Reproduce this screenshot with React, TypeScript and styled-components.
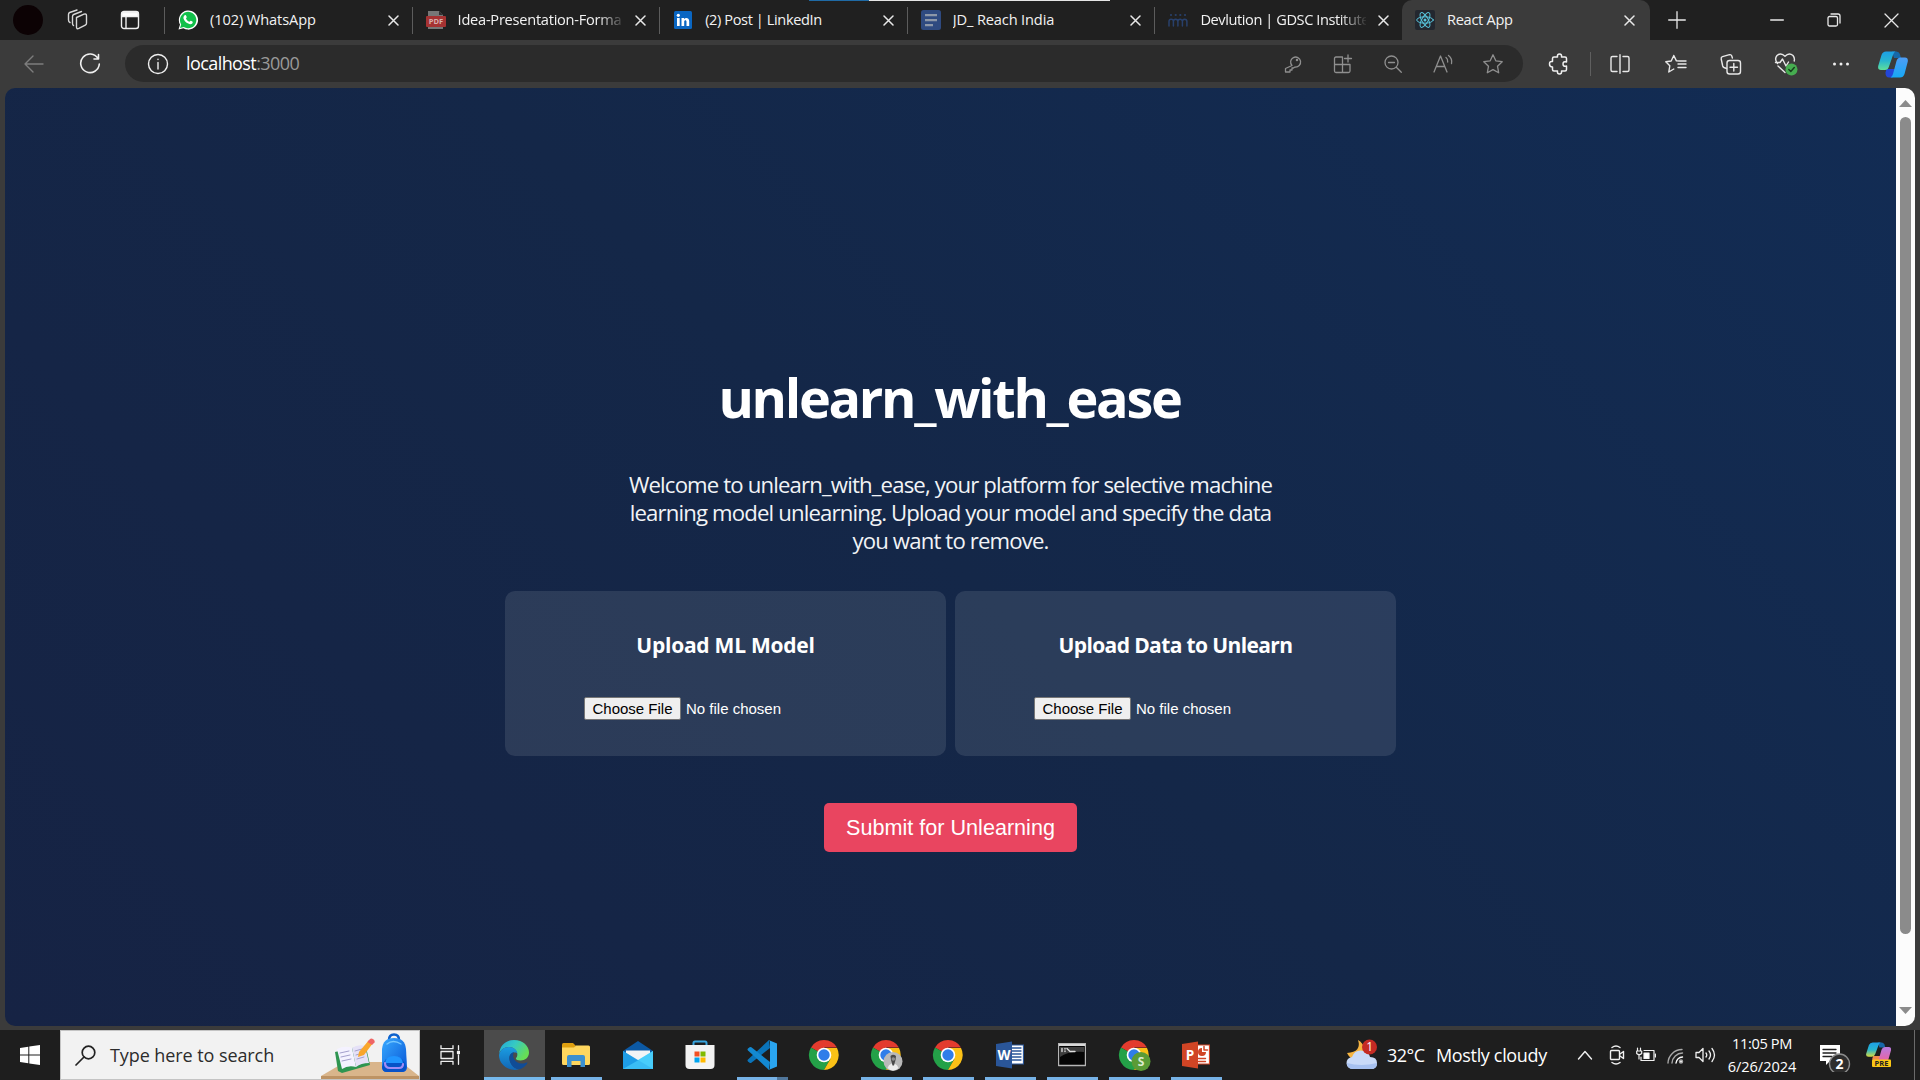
import React from "react";
import styled, { createGlobalStyle, css } from "styled-components";

const Global = createGlobalStyle`
  * { box-sizing: border-box; }
  html, body { margin: 0; padding: 0; background: #3b3b3b; }
  body { width: 1920px; height: 1080px; overflow: hidden; font-family: "Segoe UI", "Open Sans", "Noto Sans", sans-serif; color: #fff; }
  svg { display: block; flex: none; }
`;

const Screen = styled.div`
  width: 1920px;
  height: 1080px;
  display: flex;
  flex-direction: column;
  background: #3b3b3b;
`;

/* ---------- tab strip ---------- */
const TabStrip = styled.header`
  height: 40px;
  flex: none;
  display: flex;
  align-items: stretch;
  background:
    linear-gradient(#1f6aa5, #1f6aa5) 809px 0 / 60px 1px no-repeat,
    linear-gradient(#e6e6e6, #e6e6e6) 869px 0 / 241px 1px no-repeat,
    #202020;
`;

const Slot = styled.div<{ $w: number }>`
  width: ${(p) => p.$w}px;
  flex: none;
  display: flex;
  align-items: center;
  justify-content: center;
`;

const Avatar = styled.div`
  width: 30px;
  height: 30px;
  border-radius: 50%;
  background: #0c0204;
`;

const Tab = styled.div<{ $active?: boolean }>`
  width: 247.6px;
  flex: none;
  display: flex;
  align-items: center;
  padding-left: ${(p) => (p.$active ? 12 : 13)}px;
  border-left: 1px solid transparent;
  ${(p) =>
    p.$active
      ? css`
          background: #3b3b3b;
          border-radius: 10px 10px 0 0;
        `
      : css`
          border-image: linear-gradient(transparent 8px, #5c5c5c 8px, #5c5c5c 33px, transparent 33px) 1;
          border-width: 0 0 0 1px;
        `}
`;

const TabTitle = styled.span<{ $fade?: boolean; $ls: number }>`
  width: 166px;
  margin: 0 0 2px 12px;
  overflow: hidden;
  white-space: nowrap;
  font-size: 14.6px;
  line-height: 22px;
  letter-spacing: ${(p) => p.$ls}px;
  color: #f2f2f2;
  ${(p) => p.$fade && css`mask-image: linear-gradient(90deg, #000 140px, transparent 168px);`}
`;

const TabClose = styled.div`
  width: 20px;
  margin-left: 7px;
  display: flex;
  justify-content: center;
`;

const Spacer = styled.div`
  flex: 1;
`;

/* ---------- toolbar ---------- */
const Toolbar = styled.nav`
  height: 48px;
  flex: none;
  display: flex;
  align-items: center;
  padding: 0 3px 0 6px;
`;

const AddressBar = styled.div`
  width: 1398px;
  height: 37px;
  display: flex;
  align-items: center;
  padding: 0 5px 0 8px;
  margin: 0 0 1px 7px;
  border-radius: 19px;
  background: #2b2b2b;
`;

const Url = styled.span`
  flex: 1;
  margin: 0 0 1px 3px;
  font-size: 18px;
  line-height: 26px;
  letter-spacing: -0.58px;
  color: #fff;
  span { color: #9a9a9a; }
`;

const Rule = styled.div`
  width: 1px;
  height: 24px;
  margin: 0 2px;
  background: #5f5f5f;
`;

/* ---------- page ---------- */
const Viewport = styled.main`
  width: 1910px;
  height: 938px;
  margin-left: 5px;
  flex: none;
  display: flex;
  border-radius: 10px;
  overflow: hidden;
`;

const Page = styled.div`
  width: 1891px;
  display: flex;
  flex-direction: column;
  align-items: center;
  padding-top: 274px;
  background: linear-gradient(45deg, #162344 0%, #142748 50%, #122c54 100%);
`;

const Title = styled.h1`
  margin: 0;
  font-size: 54px;
  line-height: 70px;
  font-weight: 700;
  letter-spacing: -2.3px;
  text-indent: -2px;
`;

const Intro = styled.p`
  margin: 39px 0 0;
  font-size: 22.2px;
  line-height: 28px;
  letter-spacing: -0.86px;
  text-align: center;
  color: #f1f3f6;
  span { display: block; }
`;

const Cards = styled.div`
  display: flex;
  gap: 9px;
  margin-top: 36px;
`;

const Card = styled.section`
  width: 441px;
  height: 165px;
  display: flex;
  flex-direction: column;
  align-items: center;
  padding-top: 40px;
  border-radius: 10px;
  background: rgba(255, 255, 255, 0.1);
`;

const CardTitle = styled.h3<{ $ls: number }>`
  margin: 0;
  font-size: 21px;
  line-height: 28px;
  font-weight: 700;
  letter-spacing: ${(p) => p.$ls}px;
`;

const FileRow = styled.div`
  width: 283px;
  height: 23px;
  margin-top: 38px;
  display: flex;
  align-items: center;
  gap: 5px;
  font: 15px/17px "Liberation Sans", Arial, sans-serif;
`;

const FileButton = styled.button`
  height: 23px;
  width: 97px;
  padding: 0;
  border: 1px solid #767676;
  border-radius: 2px;
  background: #efefef;
  color: #000;
  font: inherit;
`;

const Submit = styled.button`
  width: 253px;
  height: 49px;
  margin-top: 47px;
  padding: 0;
  border: 0;
  border-radius: 5px;
  background: #e94560;
  color: #fff;
  font: 21.6px/25px "Liberation Sans", Arial, sans-serif;
`;

const Scrollbar = styled.div`
  width: 19px;
  display: flex;
  flex-direction: column;
  align-items: center;
  padding: 12px 0 12px;
  background: #fcfcfc;
`;

const Thumb = styled.div`
  width: 11px;
  height: 817px;
  margin-top: 10px;
  border-radius: 6px;
  background: #8b8b8b;
`;

/* ---------- taskbar ---------- */
const Taskbar = styled.footer`
  height: 50px;
  margin-top: 4px;
  flex: none;
  display: flex;
  align-items: center;
  background: #1e1e1e;
`;

const Search = styled.div`
  width: 360px;
  height: 50px;
  display: flex;
  align-items: center;
  padding-left: 14px;
  background: #f2f2f2;
  border: 1px solid #c4c4c4;
`;

const SearchText = styled.span`
  flex: 1;
  margin-left: 14px;
  font-size: 18px;
  line-height: 26px;
  letter-spacing: -0.08px;
  white-space: nowrap;
  color: #2c2c2c;
`;

const AppTile = styled.div<{ $state?: "active" | "open" | "multi" }>`
  width: 62px;
  height: 50px;
  flex: none;
  display: flex;
  align-items: center;
  justify-content: center;
  padding-right: 3px;
  ${(p) => p.$state === "active" && css`background: linear-gradient(#76b9ed, #76b9ed) 0 47px / 61px 3px no-repeat, linear-gradient(#4b4b4b, #4b4b4b) 0 0 / 61px 50px no-repeat;`}
  ${(p) => p.$state === "open" && css`background: linear-gradient(#76b2e6, #76b2e6) 5px 47px / 51px 3px no-repeat;`}
  ${(p) => p.$state === "multi" && css`background: linear-gradient(90deg, #76b2e6 40px, #50769a 40px) 5px 47px / 51px 3px no-repeat;`}
`;

const Weather = styled.div`
  display: flex;
  align-items: center;
  width: 221px;
  flex: none;
  font-size: 18px;
  line-height: 26px;
  letter-spacing: -0.34px;
  white-space: pre;
`;

const Temp = styled.span`
  width: 49px;
  margin-left: 9px;
  letter-spacing: -0.5px;
`;

const Clock = styled.div`
  width: 82px;
  flex: none;
  display: flex;
  flex-direction: column;
  align-items: center;
  font-size: 14.6px;
  line-height: 23px;
  letter-spacing: -0.35px;
`;

const DateLine = styled.span`
  letter-spacing: -0.08px;
`;

const ShowDesktop = styled.div`
  width: 6px;
  height: 50px;
  border-left: 1px solid #6a6a6a;
`;

/* ---------- drawings ---------- */
type IconProps = { w: number; h?: number; vb?: string; c?: string; sw?: number; children: React.ReactNode };
const Ico = ({ w, h = w, vb, c = "#e8e8e8", sw = 1.4, children }: IconProps) => (
  <svg width={w} height={h} viewBox={vb ?? `0 0 ${w} ${h}`} fill="none" stroke={c} strokeWidth={sw} strokeLinecap="round" strokeLinejoin="round">
    {children}
  </svg>
);

const X = ({ s = 11, sw = 1.5 }) => (
  <Ico w={s} sw={sw}><path d={`M1 1L${s - 1} ${s - 1}M${s - 1} 1L1 ${s - 1}`} /></Ico>
);

const WhatsApp = () => (
  <Ico w={20} c="none">
    <path d="M0.5 19.5L2 14.6A9.6 9.6 0 1 1 5.4 18.2Z" fill="#fff" />
    <path d="M2 18L3.2 14.4A8.2 8.2 0 1 1 5.8 17Z" fill="#12c04a" />
    <path d="M6.6 5.3c.8-.6 1.3-.3 1.6.5l.5 1.2c.2.6-.7 1-.7 1.5.6 1.6 1.8 2.6 3.400 3.2.6 0 .9-1.200 1.500-.9l1.500.8c.6.4.3 1.300-.2 1.900-1 1-2.500.8-4 .1-2.200-1-4.200-3-4.700-5.200-.2-1.200.2-2.300 1.100-3.100z" fill="#fff" />
  </Ico>
);

const IconLabel = styled.text`
  font-family: "Open Sans", sans-serif;
  font-weight: 700;
`;

const Pdf = () => (
  <Ico w={20} c="none">
    <path d="M2 1h11l4 4v14H2z" fill="#777" /><path d="M13 1v4h4z" fill="#303030" />
    <rect x="0" y="6" width="20" height="11" rx="1" fill="#a63232" />
    <IconLabel x="10" y="14" fontSize="7.500" textAnchor="middle" fill="#d9b0b0">PDF</IconLabel>
  </Ico>
);

const LinkedIn = () => (
  <Ico w={20} c="none">
    <rect x="1" y="1" width="18" height="18" rx="1.500" fill="#0a66c2" />
    <circle cx="5.300" cy="5.300" r="1.600" fill="#fff" />
    <path d="M4 8h2.700v8H4zM8.500 8h2.500v1.100c1.500-2 5.200-1.600 5.200 2.100V16h-2.700v-4.200c0-2.100-2.300-2-2.300 0V16H8.500z" fill="#fff" />
  </Ico>
);

const Docs = () => (
  <Ico w={20} c="none">
    <rect width="20" height="20" rx="2.500" fill="#2f4a80" />
    <path d="M4 4h12v2.300H4zM4 9h12v2.300H4zM4 14h8v2.300H4z" fill="#8d97a8" />
  </Ico>
);

const People = () => (
  <Ico w={20} c="#28406b" sw={1.5}>
    {[3, 7.700, 12.300, 17].map((x) => <circle key={x} cx={x} cy="5" r="1.100" fill="#28406b" stroke="none" />)}
    <path d="M1 16v-4.500a2.200 2.200 0 0 1 4.400 0V16M5.400 13v-1.500a2.200 2.200 0 0 1 4.500 0V16M9.900 13v-1.500a2.200 2.200 0 0 1 4.500 0V16M14.400 13v-1.500a2.200 2.200 0 0 1 4.500 0V16" />
  </Ico>
);

const ReactLogo = () => (
  <Ico w={20} c="#58c4dc" sw={1}>
    <rect width="20" height="20" rx="2" fill="#23272f" stroke="none" />
    {[30, 90, 150].map((a) => <ellipse key={a} cx="10" cy="10" rx="8.300" ry="3.200" transform={`rotate(${a - 30} 10 10)`} />)}
    <circle cx="10" cy="10" r="1.500" fill="#58c4dc" stroke="none" />
  </Ico>
);

const Edge = () => (
  <Ico w={30} c="none">
    <defs>
      <linearGradient id="eg" x1="0" y1="0" x2="1" y2=".5"><stop offset="0" stopColor="#1fa5dc" /><stop offset=".5" stopColor="#36c9c3" /><stop offset="1" stopColor="#67dd55" /></linearGradient>
      <linearGradient id="eb" x1="0" y1="0" x2="0" y2="1"><stop offset="0" stopColor="#1b9de2" /><stop offset="1" stopColor="#1266b4" /></linearGradient>
    </defs>
    <path d="M0 14C1 5 7 0 15 0c9 0 15 6 15 12.500 0 5-4 8-8.500 8-3.500 0-5-1-4.500-2.500.8-1 1.500-2 1.300-4C18 10 14.500 7 10 7 5 7 1.500 10 0 14z" fill="url(#eg)" />
    <path d="M0 15C1 10 5 7 10 7c5 0 8 3 8.500 6.500C17 11.500 10.500 12 10.500 18c0 6 5 10.500 9.500 11.200C12 32 0 26 0 15z" fill="url(#eb)" />
    <path d="M10.300 18c0-3 2-5.500 4.700-6-2.500 4 .5 11.500 8 11.500 2.500 0 4-.8 5-1.300 1 .4 0 1.500-.5 2.200C25 27.500 22 29 19.500 29.300 14 28.500 10.300 23 10.300 18z" fill="#104c96" />
  </Ico>
);

const Explorer = () => (
  <Ico w={28} h={24} c="none">
    <path d="M0 1.500Q0 0 1.500 0H11l2.500 2.500V6H0z" fill="#dfa010" />
    <path d="M0 4.500h12L14 2.500h12.500Q28 2.500 28 4v16.500q0 1.500-1.500 1.500h-25Q0 22 0 20.500z" fill="#ffd75e" />
    <path d="M5 24V14q0-2 2-2h14q2 0 2 2v10h-4.500v-6h-9v6z" fill="#3c90cf" />
  </Ico>
);

const Mail = () => (
  <Ico w={30} h={28} c="none">
    <path d="M0 10L15 0l15 10v5H0z" fill="#0c59a4" /><path d="M3 9.500h24v7L15 24 3 16z" fill="#f2f4f6" />
    <path d="M0 10l17 11-11 7H0z" fill="#28a8ea" /><path d="M30 10v18H0z" fill="#50d9ff" /><path d="M0 10v18h30z" fill="#1c9be6" opacity=".85" /><path d="M0 28L15 19.500 30 10v18z" fill="#45c8fa" opacity=".7" />
  </Ico>
);

const Store = () => (
  <Ico w={30} h={30} c="none">
    <path d="M8.500 6V3q0-1.500 1.500-1.500h10q1.500 0 1.500 1.500v3" stroke="#38a5df" strokeWidth="2" />
    <path d="M.5 5h29v20q0 4-4 4h-21q-4 0-4-4z" fill="#f3f3f3" />
    <path d="M9.500 11.500h5v5h-5z" fill="#f25022" /><path d="M15.500 11.500h5v5h-5z" fill="#7fba00" />
    <path d="M9.500 17.500h5v5h-5z" fill="#00a4ef" /><path d="M15.500 17.500h5v5h-5z" fill="#ffb900" />
  </Ico>
);

const VSCode = () => (
  <Ico w={30} c="none">
    <path d="M22 0L1 19.500q-1 1 0 2l1.600 1.300q.8.600 1.800 0L23 8z" fill="#0a74ba" />
    <path d="M22 30L1 10.500q-1-1 0-2l1.600-1.300q.8-.6 1.800 0L23 22z" fill="#1389d2" />
    <path d="M21.500 0L30 3.500v23L21.500 30q1.500-.6 1.500-2.500v-25Q23 .6 21.500 0z" fill="#2aa5f0" />
  </Ico>
);

const Chrome = ({ badge }: { badge?: "S" | "photo" }) => (
  <Ico w={34} h={32} vb="-2 -1 34 32" c="none">
    <path d="M15 15L2 7.500A15 15 0 0 1 28 7.500H15z" fill="#e33b2e" />
    <path d="M15 15L2 7.500A15 15 0 0 0 15 30l6.500-11.300z" fill="#24a148" />
    <path d="M15 15V8h13A15 15 0 0 1 15 30l6.500-11.300z" fill="#fbc116" />
    <circle cx="15" cy="15" r="7.300" fill="#fff" /><circle cx="15" cy="15" r="5.700" fill="#2f7de9" />
    {badge && <circle cx="22" cy="21.500" r="9.500" fill={badge === "S" ? "#5b9b36" : "#b9b9b9"} />}
    {badge === "S" && <IconLabel x="22" y="26" fontSize="12" textAnchor="middle" fill="#dcebd2">S</IconLabel>}
    {badge === "photo" && <path d="M16.500 28q1-3.500 4-4.500l3 0q3 1 4 4.500-5.500 5-11 0z" fill="#ececec" />}
    {badge === "photo" && <path d="M19.500 16q2.500-2.500 5.500 0l-.5 4-1.500 5.500h-1.500L20 20z" fill="#4a4a4a" />}
    {badge === "photo" && <circle cx="22.300" cy="19" r="1.800" fill="#909090" />}
  </Ico>
);

const Office = ({ letter, main, light }: { letter: string; main: string; light: string }) => (
  <Ico w={28} h={28} c="none">
    <path d="M13 4h14.500v19H13z" fill="#fff" stroke={light} strokeWidth="1.200" />
    {letter === "W"
      ? <path d="M16 7h9M16 10h9M16 13h9M16 16h9M16 19h9" stroke={main} strokeWidth="1.300" />
      : <><path d="M20 7a4 4 0 1 0 4 4h-4z" fill={main} /><path d="M22 5.500v3.500h3.500" stroke={main} strokeWidth="1.500" /><path d="M16.500 17.500h7M16.500 20.500h7" stroke={main} strokeWidth="1.400" /></>}
    <path d="M0 3L16 .5v27L0 25z" fill={main} />
    <IconLabel x="8" y="18.800" fontSize="13.500" textAnchor="middle" fill="#fff">{letter}</IconLabel>
  </Ico>
);

const Terminal = () => (
  <Ico w={28} h={24} c="none">
    <rect x=".5" y=".5" width="27" height="22" fill="#050505" stroke="#b5b5b5" />
    <path d="M1 1h26v2H1z" fill="#d8d8d8" /><path d="M2 4h24v5Q10 8 2 14z" fill="#3c3c3c" />
    <path d="M4 5.500v3M7 5.500v.5M7 8v.5M9 5.500l3 3h5" stroke="#ddd" />
  </Ico>
);

const Copilot = ({ pre }: { pre?: boolean }) => {
  const id = pre ? "p" : "c";
  return (
    <Ico w={30} h={27} c="none">
      <defs>
        <linearGradient id={id + "l"} x1="0" y1="0" x2="0" y2="1"><stop offset="0" stopColor="#1c9fe6" /><stop offset=".5" stopColor="#28b5cf" /><stop offset="1" stopColor={pre ? "#d8dc3c" : "#5fe09a"} /></linearGradient>
        <linearGradient id={id + "r"} x1="0" y1="0" x2="0" y2="1"><stop offset="0" stopColor={pre ? "#b77be0" : "#4f9df5"} /><stop offset="1" stopColor={pre ? "#f0609a" : "#16a8f5"} /></linearGradient>
      </defs>
      <path d="M14 .5h4.500q2.500 0 3.300 2.500L23 7h-7z" fill="#1668a8" />
      <path d="M7.500 21.500l1-3.500h9l-2.800 8.500H11q-3.500 0-3.500-5z" fill={pre ? "#f08a4a" : "#2346d8"} />
      <path d="M8 .5h9.500q-1.700.7-2.500 3.500l-4 11.500q-1 3.500-4 3.500H3Q-.5 19 .2 15L3.500 4Q4.700.5 8 .5z" fill={`url(#${id}l)`} />
      <path d="M22 26.500h-9.500q1.700-.7 2.500-3.500l3.500-13q1-3.500 4-3.500h4.500q3.300 0 2.800 4L26.500 23q-1.200 3.500-4.500 3.500z" fill={`url(#${id}r)`} />
    </Ico>
  );
};

const Windows = () => (
  <Ico w={20} c="none"><path d="M0 3l8.300-1.200v7.700H0zM9.300 1.600L20 0v9.500H9.300zM0 10.500h8.300v7.700L0 17zM9.300 10.500H20V20L9.300 18.400z" fill="#fff" /></Ico>
);

const SearchArt = () => (
  <Ico w={98} h={48} c="none">
    <defs><linearGradient id="bp" x1="0" y1="0" x2="1" y2="1"><stop offset="0" stopColor="#38a9ff" /><stop offset="1" stopColor="#0755d6" /></linearGradient></defs>
    <path d="M0 45L24 31h56l18 14v3H0z" fill="#d9b58b" /><path d="M0 45h98v3H0z" fill="#bd9364" />
    <path d="M14 21l17-4 14-1 4 18-28 8-4-2z" fill="#2e9550" />
    <path d="M16 18q8-4 15-1l4 19q-8-2-14 2z" fill="#f4f2ff" /><path d="M31 17q6-4 13-2l4 17q-8 0-13 4z" fill="#e5e1f7" />
    <path d="M19 22l9-2M20 26l9-2M21 30l9-2M34 20l7-2M35 24l7-2M36 28l7-2" stroke="#a4a0cc" strokeWidth="1" />
    <path d="M38 21L48 9l4 3-9 12-6 2z" fill="#f9a62b" /><path d="M46.500 11l2.500-3q1.500-1 3.500.5t1 3L51 14z" fill="#ef6565" />
    <path d="M68 9q0-5.500 5-5.500t5 5.500" stroke="#0d61cc" strokeWidth="2.500" />
    <path d="M61 18q1-11 12-11t12 11l1 18q0 5-5 5H66q-5 0-5-5z" fill="url(#bp)" />
    <path d="M61 36q2-10 12-10t12 10q0 5-5 5H66q-5 0-5-5z" fill="#0752c8" /><path d="M64 32q1-7 9-7t9 7z" fill="#2195ff" />
    <path d="M64 32q0 5 5 5h9q4 0 4-4" stroke="#a28cf4" strokeWidth="2.200" /><path d="M66 13q6-5 14 0" stroke="#76c8ff" />
  </Ico>
);

const WeatherIcon = () => (
  <Ico w={32} h={32} c="none">
    <path d="M12 1q4 12-11 13 5 10 15 5 6-12-4-18z" fill="#f5b441" />
    <path d="M7 30a6 6 0 0 1-1-12q3-8 12-6 5 1 6 6 7 0 7 6t-6 6z" fill="#c9daf8" />
    <path d="M7 30q-6 0-6-6 14 4 30 0 0 6-6 6z" fill="#a7c1f0" />
    <circle cx="23.500" cy="8" r="7.500" fill="#c42b24" />
    <text x="23.500" y="12.200" fontSize="12" textAnchor="middle" fill="#fff" fontFamily="Open Sans">1</text>
  </Ico>
);

const STAR = "M10 .8l2.800 6 6.400.9-4.700 4.500 1.200 6.600L10 15.600l-5.700 3.200 1.200-6.600L.8 7.700l6.400-.9z";

/* ---------- data ---------- */
const tabs = [
  { title: "(102) WhatsApp", icon: <WhatsApp />, ls: -0.1 },
  { title: "Idea-Presentation-Forma", icon: <Pdf />, fade: true, ls: -0.25 },
  { title: "(2) Post | LinkedIn", icon: <LinkedIn />, ls: -0.4 },
  { title: "JD_ Reach India", icon: <Docs />, ls: -0.14 },
  { title: "Devlution | GDSC Institute", icon: <People />, fade: true, ls: -0.42 },
  { title: "React App", icon: <ReactLogo />, active: true, ls: -0.3 },
];

const cards = [
  { title: "Upload ML Model", ls: -0.25 },
  { title: "Upload Data to Unlearn", ls: -0.62 },
];

const apps: { icon: React.ReactNode; state?: "active" | "open" | "multi" }[] = [
  { icon: <Edge />, state: "active" },
  { icon: <Explorer />, state: "open" },
  { icon: <Mail /> },
  { icon: <Store /> },
  { icon: <VSCode />, state: "multi" },
  { icon: <Chrome /> },
  { icon: <Chrome badge="photo" />, state: "open" },
  { icon: <Chrome />, state: "open" },
  { icon: <Office letter="W" main="#2a5699" light="#2a5699" />, state: "open" },
  { icon: <Terminal />, state: "open" },
  { icon: <Chrome badge="S" />, state: "open" },
  { icon: <Office letter="P" main="#d04525" light="#d04525" />, state: "open" },
];

const dim = "#8f8f8f";

export default function App() {
  return (
    <Screen>
      <Global />
      <TabStrip>
        <Slot $w={55}><Avatar /></Slot>
        <Slot $w={45}>
          <Ico w={22} c="#d8d8d8">
            <path d="M9.500 8.500L17 5.200q2.500-.8 2.500 1.500v7.500q0 1.300-1.200 1.900l-6.500 3.300Q9.500 20.500 9.500 18z" />
            <path d="M6.500 16.500q-1-.5-1-2V7.500q0-1.500 1.200-2L14.500 2.500M3 13.500Q1.500 13 1.500 11V5.500q0-1.500 1.200-2L10 1" />
          </Ico>
        </Slot>
        <Slot $w={59}>
          <Ico w={20} c="#f0f0f0"><rect x="1.500" y="1.500" width="17" height="17" rx="2.500" /><path d="M2 2.500h16v4H2z" fill="#fff" /><path d="M6 7v11" /></Ico>
        </Slot>
        <Slot $w={5} />
        {tabs.map((t) => (
          <Tab key={t.title} $active={t.active}>
            {t.icon}
            <TabTitle $fade={t.fade} $ls={t.ls}>{t.title}</TabTitle>
            <TabClose><X /></TabClose>
          </Tab>
        ))}
        <Slot $w={54}><Ico w={18} sw={1.300}><path d="M9 .7v16.600M.7 9h16.600" /></Ico></Slot>
        <Spacer />
        <Slot $w={57}><Ico w={14}><path d="M.7 7h12.600" /></Ico></Slot>
        <Slot $w={57}><Ico w={14} sw={1.300}><rect x="1" y="3.500" width="9.500" height="9.500" rx="1.500" /><path d="M4 1h7q2 0 2 2v7" /></Ico></Slot>
        <Slot $w={58}><X s={15} sw={1.300} /></Slot>
      </TabStrip>

      <Toolbar>
        <Slot $w={56}><Ico w={20} c="#7d7d7d"><path d="M19 10H1M9 2l-8 8 8 8" /></Ico></Slot>
        <Slot $w={56}><Ico w={22} c="#f0f0f0" sw={1.600}><path d="M19 5.500A9.300 9.300 0 1 0 20.300 11M19.500 1.500V6H15" /></Ico></Slot>
        <AddressBar>
          <Slot $w={50}><Ico w={22} c="#f0f0f0"><circle cx="11" cy="11" r="9.500" /><path d="M11 9.500V16M11 6.200v.3" /></Ico></Slot>
          <Url>localhost<span>:3000</span></Url>
          <Slot $w={50}><Ico w={18} c={dim} sw={1.300}><path d="M8 10.500A5 5 0 1 1 11 12l-1.500 1H8v2H6v2H1.500v-3.500z" /><circle cx="13" cy="5" r=".6" /></Ico></Slot>
          <Slot $w={50}><Ico w={20} c={dim} sw={1.300}><path d="M9.500 3H3q-1.500 0-1.500 1.500V17q0 1.500 1.500 1.500h12.500q1.500 0 1.500-1.500v-6.500H1.500M9.500 3v15.500M15 1v7M11.500 4.500h7" /></Ico></Slot>
          <Slot $w={50}><Ico w={20} c={dim} sw={1.300}><circle cx="8.500" cy="8.500" r="6.500" /><path d="M13.300 13.300l5 5M5.500 8.500h6" /></Ico></Slot>
          <Slot $w={50}><Ico w={22} c={dim} sw={1.300}><path d="M2 19L8.500 3 15 19M4.300 13.500h8.400M14 4.500q2 1.500 1.700 4.500M16.500 2.500q4 3 3 8" /></Ico></Slot>
          <Slot $w={50}><Ico w={20} c={dim} sw={1.300}><path d={STAR} /></Ico></Slot>
        </AddressBar>
        <Slot $w={8} />
        <Slot $w={56}><Ico w={22} c="#f0f0f0" sw={1.500}><path d="M6 4h3.500q-.5-3 2-3t2 3H17q1.500 0 1.500 1.500V9q-3.500-1-3.500 2t3.500 2v3.500q0 1.500-1.500 1.500h-3.500q.5 3-2 3t-2-3H6q-1.500 0-1.500-1.500V14Q1.500 14 1.500 11t3-2.500v-3Q4.500 4 6 4z" /></Ico></Slot>
        <Slot $w={1} />
        <Rule />
        <Slot $w={55}><Ico w={22} h={20}><path d="M8 2.500H3.500Q2 2.500 2 4v12q0 1.500 1.500 1.500H8M14 2.500h4.500Q20 2.500 20 4v12q0 1.500-1.500 1.500H14M11 .7v18.600" /></Ico></Slot>
        <Slot $w={55.400}><Ico w={22} h={20}><path d="M15 7l-3.600-.1L8.800 1.500 6.200 7l-5.400.8 4 4-1 6.200 5-3M13 10h8M15 7h6M13 13.500h8" /></Ico></Slot>
        <Slot $w={55.400}><Ico w={22}><path d="M6.500 15.500L4 14.500q-1-.5-1.300-1.500L1.200 6q-.3-1.800 1.300-2.300l7-2q1.600-.4 2.300 1.300l.6 2" /><rect x="7" y="7.500" width="13.500" height="13.500" rx="2.500" /><path d="M13.800 10.500v7.500M10 14.200h7.500" /></Ico></Slot>
        <Slot $w={55.400}><Ico w={24}><path d="M3.500 11.500Q0 7 3 3.500q4-3.500 8 .8 4-4.300 8-.8 2 2.500 1.200 5.500M4 14l7 6.500M1.500 10.500H6L8.500 7l3.500 7 2.500-4" /><circle cx="17.500" cy="17.500" r="6" fill="#46ad50" stroke="none" /><path d="M14.800 17.500l2 2 3.500-4" stroke="#173d1c" /></Ico></Slot>
        <Slot $w={54}><Ico w={18} h={4} c="none"><circle cx="2.500" cy="2" r="1.500" fill="#eee" /><circle cx="9" cy="2" r="1.500" fill="#eee" /><circle cx="15.500" cy="2" r="1.500" fill="#eee" /></Ico></Slot>
        <Slot $w={49}><Copilot /></Slot>
      </Toolbar>

      <Viewport>
        <Page>
          <Title>unlearn_with_ease</Title>
          <Intro>
            <span>Welcome to unlearn_with_ease, your platform for selective machine</span>
            <span>learning model unlearning. Upload your model and specify the data</span>
            <span>you want to remove.</span>
          </Intro>
          <Cards>
            {cards.map((c) => (
              <Card key={c.title}>
                <CardTitle $ls={c.ls}>{c.title}</CardTitle>
                <FileRow><FileButton>Choose File</FileButton>No file chosen</FileRow>
              </Card>
            ))}
          </Cards>
          <Submit>Submit for Unlearning</Submit>
        </Page>
        <Scrollbar>
          <Ico w={13} h={7} c="none"><path d="M0 7L6.500 0 13 7z" fill="#8b8b8b" /></Ico>
          <Thumb />
          <Spacer />
          <Ico w={13} h={7} c="none"><path d="M0 0L6.500 7 13 0z" fill="#8b8b8b" /></Ico>
        </Scrollbar>
      </Viewport>

      <Taskbar>
        <Slot $w={60}><Windows /></Slot>
        <Search>
          <Ico w={21} c="#222" sw={1.700}><circle cx="13.500" cy="7.500" r="6.300" /><path d="M9 12L1 20" /></Ico>
          <SearchText>Type here to search</SearchText>
          <SearchArt />
        </Search>
        <Slot $w={60}>
          <Ico w={20} h={20} c="#f0f0f0" sw={1.300}><path d="M1 .7v3h12v-3M1 19.300v-3h12v3M1 6.500h12v7H1zM18.500.7v4M18.500 10v9.300" /><path d="M17.500 6.500h2v2h-2z" fill="#fff" /></Ico>
        </Slot>
        <Slot $w={4} />
        {apps.map((a, i) => <AppTile key={i} $state={a.state}>{a.icon}</AppTile>)}
        <Spacer />
        <Weather><WeatherIcon /><Temp>32°C</Temp>Mostly cloudy</Weather>
        <Slot $w={36}><Ico w={16} h={10} c="#f0f0f0"><path d="M1.500 9L8 1.500 14.500 9" /></Ico></Slot>
        <Slot $w={27}><Ico w={16} h={20} c="#f0f0f0"><rect x="1.500" y="5.500" width="9" height="9" rx="1" /><path d="M11 9l3.500-2.500v7L11 11M3 2.500q4-3 8 0M3 17.500q4 3 8 0" /></Ico></Slot>
        <Slot $w={31}><Ico w={20} h={16} c="#f0f0f0" sw={1.200}><path d="M8 3.500h10v10H5V10M19.500 7v3M1.500 1v3M4.500 1v3M.7 4h5v2.500q-2.500 2.500-5 0zM3 8v4" /><path d="M8 6h5v5.500H8z" fill="#fff" /></Ico></Slot>
        <Slot $w={28}><Ico w={18} c="#a9a9a9"><path d="M2 17A14 14 0 0 1 16 3.500M6 17A10.500 10.500 0 0 1 16.500 7" /><path d="M10 17a7 7 0 0 1 6.500-6" stroke="#fff" /><circle cx="15" cy="15.500" r="1.500" fill="#fff" /></Ico></Slot>
        <Slot $w={32}><Ico w={21} h={18} c="#f0f0f0" sw={1.300}><path d="M1 6.500h3L8 2.500v13l-4-4H1z" /><path d="M11 7q1.500 2 0 4M14 5q3 4 0 8M17 2.500q5 6.500 0 13" /></Ico></Slot>
        <Clock><span>11:05 PM</span><DateLine>6/26/2024</DateLine></Clock>
        <Slot $w={14} />
        <Slot $w={36}>
          <Ico w={32} h={34} c="none">
            <path d="M1 7h20v16H11l-4 4v-4H1z" fill="#fff" /><path d="M4 11.500h13M4 15h13M4 18.500h9" stroke="#1e1e1e" strokeWidth="1.300" />
            <circle cx="20.500" cy="26" r="10" fill="#2d2d2d" stroke="#8b8b8b" />
            <IconLabel x="20.500" y="31" fontSize="14" textAnchor="middle" fill="#fff">2</IconLabel>
          </Ico>
        </Slot>
        <Slot $w={52}>
          <Ico w={26} h={26} c="none">
            <g transform="scale(.84 .78)"><Copilot pre /></g>
            <rect x="6" y="17.500" width="19" height="7.500" rx="1" fill="#fbc716" />
            <IconLabel x="15.500" y="24" fontSize="7.500" textAnchor="middle" fill="#222">PRE</IconLabel>
          </Ico>
        </Slot>
        <Slot $w={9} />
        <ShowDesktop />
      </Taskbar>
    </Screen>
  );
}
